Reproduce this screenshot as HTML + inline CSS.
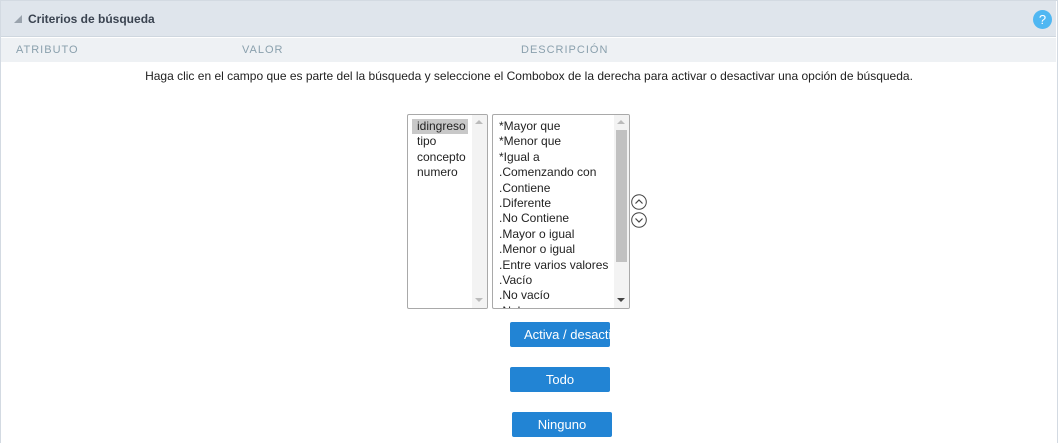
<!DOCTYPE html>
<html><head><meta charset="utf-8"><style>
*{margin:0;padding:0;box-sizing:border-box}
body{width:1058px;height:443px;background:#fff;font-family:"Liberation Sans",sans-serif;position:relative;overflow:hidden}
.frame{position:absolute;left:0;top:0;width:1058px;height:443px;border:1px solid #d3dae2;border-bottom:none}
.hd{position:absolute;left:1px;top:1px;width:1055px;height:36px;background:#dfe5ec;border-bottom:1px solid #cfd7df}
.hd .t{position:absolute;left:27px;top:11px;font-size:12px;font-weight:bold;color:#3a4350}
.tri{position:absolute;left:13px;top:14px;width:0;height:0;border-left:8px solid transparent;border-bottom:8px solid #9aa3ad}
.help{position:absolute;left:1032px;top:9px;width:19px;height:19px;border-radius:50%;background:#4fb7f2;color:#fff;font-size:13px;text-align:center;line-height:19px}
.cols{position:absolute;left:1px;top:38px;width:1055px;height:24px;background:#eef1f4;font-size:11px;letter-spacing:1px;color:#8aa0ad}
.cols span{position:absolute;top:6px}
.msg{position:absolute;left:0;width:1058px;top:69px;text-align:center;font-size:12px;color:#222}
.lb{position:absolute;border:1px solid #a9a9a9;border-radius:2px;background:#fff;font-size:12px;color:#222;overflow:hidden}
.it{height:15.4px;line-height:15px;white-space:nowrap}
.sb{position:absolute;right:0;top:0;width:15px;height:100%;background:#f3f3f3}
.up{position:absolute;left:3px;top:5px;width:0;height:0;border-left:4px solid transparent;border-right:4px solid transparent;border-bottom:4px solid #bbb}
.dn{position:absolute;left:3px;bottom:6px;width:0;height:0;border-left:4px solid transparent;border-right:4px solid transparent;border-top:4px solid #bbb}
.thumb{position:absolute;left:2px;top:15px;width:11px;height:132px;background:#c1c1c1}
.btn{position:absolute;height:25px;background:#2284d4;color:#fff;font-size:13px;text-align:center;line-height:25px;border-radius:2px;overflow:hidden;white-space:nowrap}
</style></head><body>
<div class="frame"></div>
<div class="hd"><div class="tri"></div><div class="t">Criterios de búsqueda</div><div class="help">?</div></div>
<div class="cols"><span style="left:15px">ATRIBUTO</span><span style="left:241px">VALOR</span><span style="left:520px">DESCRIPCIÓN</span></div>
<div class="msg">Haga clic en el campo que es parte del la búsqueda y seleccione el Combobox de la derecha para activar o desactivar una opción de búsqueda.</div>
<div class="lb" style="left:407px;top:114px;width:81px;height:195px;padding-top:4px">
<div class="it" style="background:#c8c8c8;margin-left:4px;padding-left:5px;width:56px">idingreso</div><div class="it" style="padding-left:9px">tipo</div><div class="it" style="padding-left:9px">concepto</div><div class="it" style="padding-left:9px">numero</div>
<div class="sb"><span class="up"></span><span class="dn"></span></div></div>
<div class="lb" style="left:492px;top:114px;width:138px;height:195px;padding-top:4px;padding-left:6px">
<div class="it">*Mayor que</div><div class="it">*Menor que</div><div class="it">*Igual a</div><div class="it">.Comenzando con</div><div class="it">.Contiene</div><div class="it">.Diferente</div><div class="it">.No Contiene</div><div class="it">.Mayor o igual</div><div class="it">.Menor o igual</div><div class="it">.Entre varios valores</div><div class="it">.Vacío</div><div class="it">.No vacío</div><div class="it">.Nulo</div>
<div class="sb"><span class="up"></span><span class="thumb"></span><span class="dn" style="border-top-color:#444"></span></div></div>
<svg style="position:absolute;left:630px;top:193px" width="18" height="36"><circle cx="9" cy="9" r="7.3" fill="none" stroke="#444" stroke-width="1"/><path d="M5.5 10.5L9 7L12.5 10.5" fill="none" stroke="#444" stroke-width="1.2"/><circle cx="9" cy="27" r="7.3" fill="none" stroke="#444" stroke-width="1"/><path d="M5.5 25.5L9 29L12.5 25.5" fill="none" stroke="#444" stroke-width="1.2"/></svg>
<div class="btn" style="left:510px;top:322px;width:100px;text-align:left;padding-left:14px">Activa / desactivar</div>
<div class="btn" style="left:510px;top:367px;width:100px">Todo</div>
<div class="btn" style="left:512px;top:412px;width:100px">Ninguno</div>
</body></html>
